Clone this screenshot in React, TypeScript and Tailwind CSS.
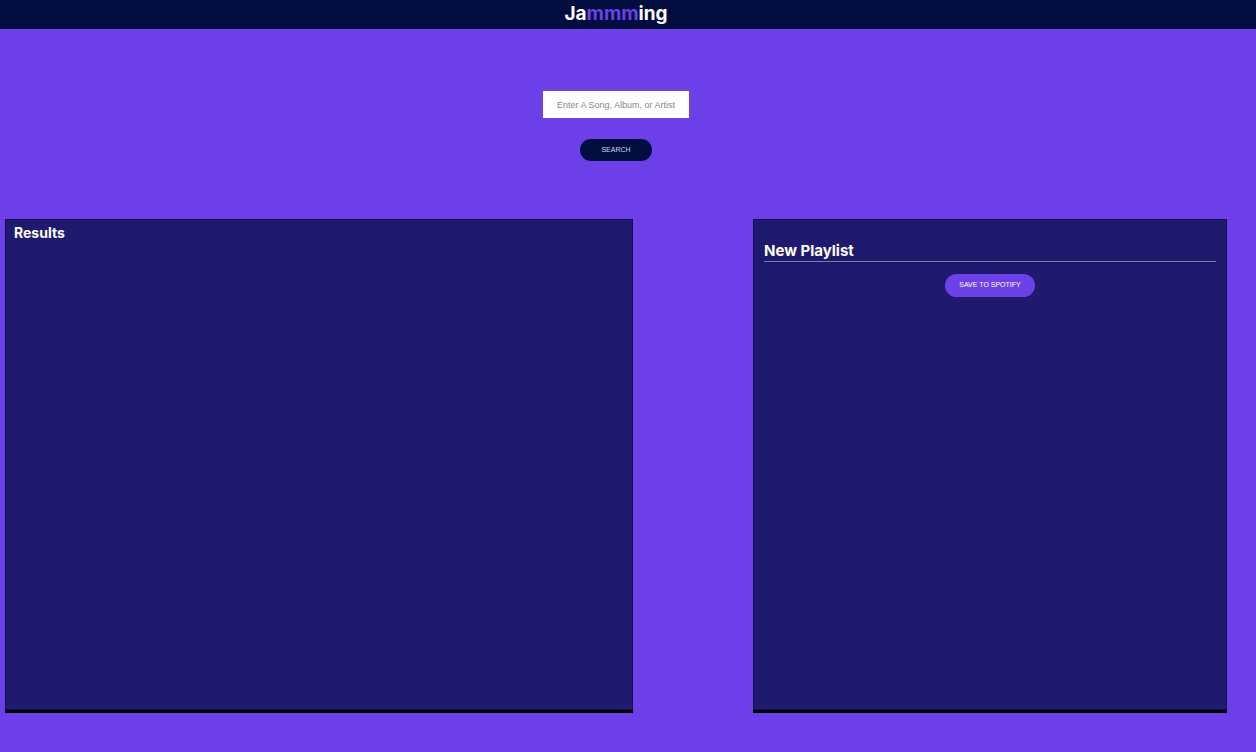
export default function App() {
  return (
    <div className="min-h-[752px] w-full bg-[#6c3fe9]" style={{ fontFamily: '"Liberation Sans", Arial, sans-serif' }}>
      <header className="h-[29px] bg-[#010c3f] w-full">
        <div className="w-[1232px] flex justify-center">
          <h1 className="text-[19px] leading-[27px] font-bold text-white" style={{ fontFamily: 'Inter, "DejaVu Sans", sans-serif' }}>
            Ja<span className="text-[#6c41e8]">mmm</span>ing
          </h1>
        </div>
      </header>

      <div className="w-[1232px] flex flex-col items-center pt-[62px]">
        <input
          type="text"
          placeholder="Enter A Song, Album, or Artist"
          className="w-[146px] h-[27px] bg-white text-center text-[9px] text-[#555] placeholder:text-[#888] outline-none"
        />
        <button className="mt-[21px] w-[72px] h-[22px] rounded-full bg-[#010c3f] text-[7px] text-[#d8d8f0] uppercase">
          Search
        </button>
      </div>

      <div className="flex pt-[58px] pl-[5px] gap-[120px]">
        <section className="w-[628px] h-[491px] bg-[#201a6f] border border-[#140f4a] shadow-[0_3px_0_#000] px-[8px] pt-[3px]">
          <h2 className="text-[14px] leading-[20px] font-bold text-white" style={{ fontFamily: 'Inter, "DejaVu Sans", sans-serif' }}>Results</h2>
        </section>
        <section className="w-[474px] h-[491px] bg-[#201a6f] border border-[#140f4a] shadow-[0_3px_0_#000] px-[10px] pt-[21px] flex flex-col">
          <h2 className="text-[15px] font-bold text-white leading-[19px] border-b border-[#7a7a9a] pb-[1px]" style={{ fontFamily: 'Inter, "DejaVu Sans", sans-serif' }}>New Playlist</h2>
          <div className="flex justify-center mt-[12px]">
            <button className="w-[90px] h-[23px] rounded-full bg-[#6c41e8] text-[7px] text-white uppercase">
              Save to Spotify
            </button>
          </div>
        </section>
      </div>
    </div>
  );
}
